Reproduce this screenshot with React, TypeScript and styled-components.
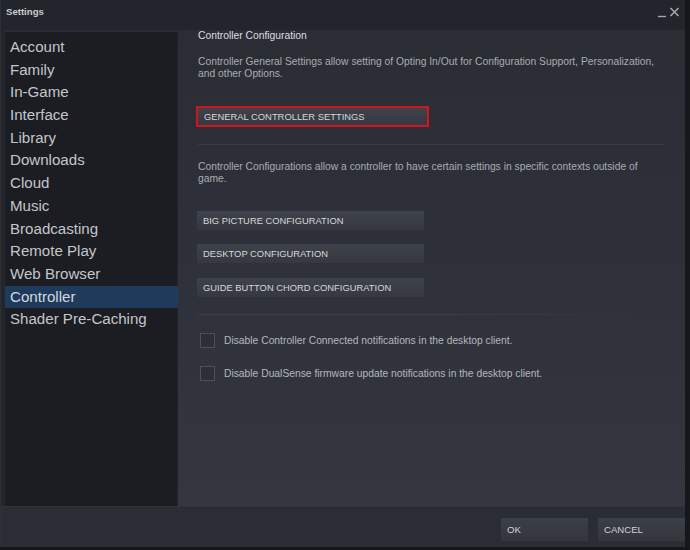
import * as React from 'react';
import styled, { createGlobalStyle } from 'styled-components';

const GlobalStyle = createGlobalStyle`
  html, body {
    margin: 0;
    padding: 0;
    background: #15171b;
  }
  * {
    box-sizing: border-box;
  }
`;

const sections = [
  'Account',
  'Family',
  'In-Game',
  'Interface',
  'Library',
  'Downloads',
  'Cloud',
  'Music',
  'Broadcasting',
  'Remote Play',
  'Web Browser',
  'Controller',
  'Shader Pre-Caching',
];

const configButtons = [
  'BIG PICTURE CONFIGURATION',
  'DESKTOP CONFIGURATION',
  'GUIDE BUTTON CHORD CONFIGURATION',
];

const notifications = [
  'Disable Controller Connected notifications in the desktop client.',
  'Disable DualSense firmware update notifications in the desktop client.',
];

export default function App() {
  return (
    <>
      <GlobalStyle />
      <Page>
        <Window>
          <TitleBar>
            <Title>Settings</Title>
            <WindowControls>
              <svg width="10" height="12" viewBox="0 0 10 12">
                <line x1="1" y1="10.5" x2="9" y2="10.5" stroke="#a3a7ad" strokeWidth="1.4" />
              </svg>
              <svg width="11" height="12" viewBox="0 0 11 12">
                <path d="M1.5 2 L9.5 10 M9.5 2 L1.5 10" stroke="#a3a7ad" strokeWidth="1.6" />
              </svg>
            </WindowControls>
          </TitleBar>
          <Body>
            <Sidebar>
              {sections.map((name) => (
                <NavItem key={name} $active={name === 'Controller'}>
                  {name}
                </NavItem>
              ))}
            </Sidebar>
            <Content>
              <Heading>Controller Configuration</Heading>
              <Description>
                Controller General Settings allow setting of Opting In/Out for Configuration Support, Personalization,
                and other Options.
              </Description>
              <Highlight>
                <ConfigButton $height={17} $width={229}>GENERAL CONTROLLER SETTINGS</ConfigButton>
              </Highlight>
              <Divider $fade={false} />
              <Description $top={16}>
                Controller Configurations allow a controller to have certain settings in specific contexts outside of
                game.
              </Description>
              <ButtonStack>
                {configButtons.map((label) => (
                  <ConfigButton key={label} $height={19} $width={227}>
                    {label}
                  </ConfigButton>
                ))}
              </ButtonStack>
              <Divider $fade />
              <Options>
                {notifications.map((label) => (
                  <CheckRow key={label}>
                    <CheckBox />
                    <CheckLabel>{label}</CheckLabel>
                  </CheckRow>
                ))}
              </Options>
            </Content>
          </Body>
          <Footer>
            <FooterButton>OK</FooterButton>
            <FooterButton>CANCEL</FooterButton>
          </Footer>
        </Window>
      </Page>
    </>
  );
}

const Page = styled.div`
  width: 690px;
  height: 550px;
  overflow: hidden;
  background: #15171b;
  font-family: 'Liberation Sans', Arial, sans-serif;
`;

const Window = styled.div`
  width: 685px;
  height: 547px;
  display: flex;
  flex-direction: column;
  background: #23262c;
  border-left: 1px solid #2d3038;
`;

const TitleBar = styled.div`
  height: 30px;
  flex: none;
  display: flex;
  align-items: flex-start;
  justify-content: space-between;
  padding: 6px 5px 0 5px;
  background: #22252b;
`;

const Title = styled.div`
  font-size: 9.6px;
  font-weight: bold;
  color: #c9ccd0;
  line-height: 12px;
`;

const WindowControls = styled.div`
  display: flex;
  gap: 2px;
  align-items: flex-start;
  svg {
    display: block;
  }
`;

const Body = styled.div`
  flex: 1;
  display: flex;
  padding-left: 4px;
  min-height: 0;
`;

const Sidebar = styled.div`
  width: 173px;
  flex: none;
  background: #1b1d22;
  border-top: 2px solid #282c34;
  padding-top: 4px;
  box-shadow: inset -1px 0 0 #202329;
`;

const NavItem = styled.div<{ $active?: boolean }>`
  height: 22.7px;
  line-height: 22.7px;
  padding-left: 5px;
  font-size: 15.1px;
  color: ${(p) => (p.$active ? '#d3d8df' : '#c3c6cb')};
  background: ${(p) => (p.$active ? '#1f3b5b' : 'transparent')};
  white-space: nowrap;
`;

const Content = styled.div`
  flex: 1;
  display: flex;
  flex-direction: column;
  align-items: flex-start;
  padding: 0 20px 0 20px;
  background: linear-gradient(to bottom, #2a2d34 0%, #2e313a 50%, #34373f 100%);
`;

const Heading = styled.div`
  font-size: 10.3px;
  line-height: 12px;
  color: #dcdee0;
`;

const Description = styled.div<{ $top?: number }>`
  margin-top: ${(p) => p.$top ?? 14}px;
  font-size: 10.3px;
  line-height: 12px;
  color: #a9acb1;
  max-width: 470px;
`;

const Highlight = styled.div`
  margin-top: 26px;
  margin-left: -2px;
  border: 2px solid #d3141c;
  display: flex;
`;

const ConfigButton = styled.div<{ $height: number; $width: number }>`
  width: ${(p) => p.$width}px;
  height: ${(p) => p.$height}px;
  display: flex;
  align-items: center;
  padding-left: 6px;
  font-size: 9.4px;
  color: #d5d7da;
  background: linear-gradient(to bottom, #3e424a 0%, #353840 100%);
  white-space: nowrap;
`;

const Divider = styled.div<{ $fade: boolean }>`
  margin-top: 17px;
  width: ${(p) => (p.$fade ? '440px' : '466px')};
  height: 1px;
  background: ${(p) =>
    p.$fade
      ? 'linear-gradient(to right, #3b3f48 0%, #3b3f48 55%, rgba(59, 63, 72, 0) 100%)'
      : '#383c45'};
`;

const ButtonStack = styled.div`
  margin-top: 26px;
  margin-left: -1px;
  display: flex;
  flex-direction: column;
  gap: 14.3px;
`;

const Options = styled.div`
  margin-top: 18px;
  display: flex;
  flex-direction: column;
  gap: 18px;
`;

const CheckRow = styled.div`
  display: flex;
  align-items: center;
  gap: 9px;
  padding-left: 2px;
`;

const CheckBox = styled.div`
  width: 15px;
  height: 15px;
  border: 1px solid #4d5058;
  background: #2c2f36;
`;

const CheckLabel = styled.div`
  font-size: 10.3px;
  color: #b4b7bc;
`;

const Footer = styled.div`
  height: 41px;
  flex: none;
  display: flex;
  justify-content: flex-end;
  align-items: flex-start;
  gap: 10px;
  padding-top: 11px;
  background: #2a2d33;
  border-top: 1px solid #30333a;
`;

const FooterButton = styled.div`
  width: 87px;
  height: 23px;
  display: flex;
  align-items: center;
  padding-left: 6px;
  font-size: 9.6px;
  color: #d0d2d5;
  background: linear-gradient(to bottom, #3b3f47 0%, #33363d 100%);
`;
